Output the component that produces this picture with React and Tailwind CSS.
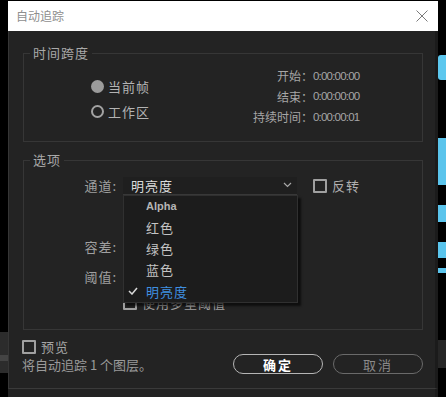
import { useState } from 'react'

const items = ['Alpha', '红色', '绿色', '蓝色', '明亮度']

function Radio({ on }) {
  return on ? (
    <span className="w-[13px] h-[13px] rounded-full bg-[#9b9b9b]" />
  ) : (
    <span className="w-[13px] h-[13px] rounded-full border-[2.5px] border-[#a3a3a3]" />
  )
}

function Box() {
  return <span className="w-[14px] h-[14px] border-2 border-[#a0a0a0] rounded-[1px] shrink-0" />
}

function Time({ label, value }) {
  return (
    <>
      <span className="text-[12px] text-right text-[#a6a6a6]">{label}</span>
      <span className="text-[11.5px] tracking-[-0.8px] whitespace-nowrap font-['Liberation_Sans',sans-serif] text-[#a6a6a6]">{value}</span>
    </>
  )
}

export default function App() {
  const [channel] = useState('明亮度')

  return (
    <div className="relative w-[446px] h-[397px] bg-black overflow-hidden font-['Noto_Sans_CJK_SC','Noto_Sans',sans-serif]">
      {/* desktop behind the dialog */}
      <div className="absolute right-0 top-[55px] w-[8px] h-[25px] bg-[#5cc7ee] rounded-l-[3px]" />
      <div className="absolute right-0 top-[138px] w-[8px] h-[47px] bg-[#5ac4ec]" />
      <div className="absolute right-0 top-[205px] w-[8px] h-[17px] bg-[#5ac4ec]" />
      <div className="absolute right-0 top-[242px] w-[8px] h-[16px] bg-[#5ac4ec]" />
      <div className="absolute right-0 top-[268px] w-[8px] h-[5px] bg-[#5ac4ec]" />
      <div className="absolute right-0 top-[340px] w-[8px] h-[28px] bg-[#262626]" />
      <div className="absolute left-0 top-[332px] w-[8px] h-[41px] bg-[#2c2c2c]" />
      <div className="absolute left-0 top-[355px] w-[8px] h-[6px] bg-[#444]" />

      {/* dialog window */}
      <div className="absolute left-[8px] top-[1px] w-[430px] h-[396px] flex flex-col">
        <div className="h-[30px] bg-white flex items-center justify-between pl-[8px] pr-[10px]">
          <span className="text-[12px] leading-none text-[#8e8e8e]">自动追踪</span>
          <svg width="12" height="12" viewBox="0 0 12 12">
            <path d="M0.5 0.5 L11.5 11.5 M11.5 0.5 L0.5 11.5" stroke="#7a7a7a" strokeWidth="1" />
          </svg>
        </div>

        <div className="h-[358px] bg-[#232323] border-l border-b border-r-[3px] border-l-[#363636] border-b-[#3a3a3a] border-r-[#1b1b1b] pl-[14px] pr-[12px] pt-[22px] flex flex-col">
          {/* 时间跨度 */}
          <div className="relative h-[89px] border border-[#363636] flex">
            <span className="absolute left-[6px] -top-[10px] px-[3px] bg-[#232323] text-[13px] leading-[18px] tracking-[1px] text-[#a9a9a9]">时间跨度</span>
            <div className="ml-[67px] pt-[20px] flex flex-col">
              <div className="h-[25px] flex items-center gap-[4px]">
                <Radio on />
                <span className="text-[13px] tracking-[1px] text-[#b3b3b3]">当前帧</span>
              </div>
              <div className="h-[25px] flex items-center gap-[4px]">
                <Radio />
                <span className="text-[13px] tracking-[1px] text-[#b3b3b3]">工作区</span>
              </div>
            </div>
            <div className="ml-auto mr-[61px] pt-[12px] grid grid-cols-[auto_48px] auto-rows-[20.5px] items-center">
              <Time label="开始：" value="0:00:00:00" />
              <Time label="结束：" value="0:00:00:00" />
              <Time label="持续时间：" value="0:00:00:01" />
            </div>
          </div>

          {/* 选项 */}
          <div className="relative mt-[18px] h-[170px] border border-[#363636] flex flex-col">
            <span className="absolute left-[6px] -top-[10px] px-[3px] bg-[#232323] text-[13px] leading-[18px] tracking-[1px] text-[#a9a9a9]">选项</span>

            <div className="mt-[15px] flex items-center">
              <span className="w-[93px] text-right text-[13px] leading-[18px] tracking-[1px] text-[#a0a0a0]">通道:</span>
              <div className="ml-[6px] w-[174px] h-[18px] bg-[#1f1f1f] border-b border-[#383838] flex items-center justify-between pl-[8px] pr-[5px]">
                <span className="text-[13px] tracking-[1px] text-[#dcdcdc]">{channel}</span>
                <svg width="9" height="6" viewBox="0 0 9 6">
                  <path d="M1 1 L4.5 4.5 L8 1" fill="none" stroke="#a8a8a8" strokeWidth="1.2" />
                </svg>
              </div>
              <div className="ml-[16px] flex items-center gap-[5px]">
                <Box />
                <span className="text-[13px] tracking-[1px] text-[#b0b0b0]">反转</span>
              </div>
            </div>

            <div className="mt-[42px] flex items-center">
              <span className="w-[93px] text-right text-[13px] leading-[18px] tracking-[1px] text-[#a0a0a0]">容差:</span>
            </div>
            <div className="mt-[12px] flex items-center">
              <span className="w-[93px] text-right text-[13px] leading-[18px] tracking-[1px] text-[#a0a0a0]">阈值:</span>
            </div>
            <div className="mt-[9px] ml-[99px] flex items-center gap-[5px]">
              <Box />
              <span className="text-[13px] leading-[16px] tracking-[1px] text-[#a0a0a0]">使用多重阈值</span>
            </div>

            {/* open channel menu */}
            <div className="absolute left-[99px] top-[34px] w-[175px] h-[108px] bg-[#1c1c1c] border border-[#303030] shadow-[3px_3px_2px_rgba(0,0,0,0.6)] flex flex-col">
              {items.map((it) => (
                <div key={it} className="h-[21.2px] flex items-center">
                  <span className="w-[22px] pl-[4px] flex items-center">
                    {it === channel && (
                      <svg width="10" height="8" viewBox="0 0 10 8">
                        <path d="M1 4 L4 7 L9 1" fill="none" stroke="#d8d8d8" strokeWidth="1.5" />
                      </svg>
                    )}
                  </span>
                  <span
                    className={
                      it === 'Alpha'
                        ? 'text-[11px] font-bold font-[\'Liberation_Sans\',sans-serif] text-[#b5b5b5]'
                        : it === channel
                        ? 'text-[13px] tracking-[1px] text-[#3f8fe0]'
                        : 'text-[13px] tracking-[1px] text-[#c4c4c4]'
                    }
                  >
                    {it}
                  </span>
                </div>
              ))}
            </div>
          </div>

          {/* footer */}
          <div className="flex items-start">
            <div className="mt-[8px] -ml-[1px] flex flex-col">
              <div className="h-[18px] flex items-center gap-[5px]">
                <Box />
                <span className="text-[13px] tracking-[1px] text-[#a5a5a5]">预览</span>
              </div>
              <span className="text-[13px] leading-[18px] text-[#9a9a9a]">将自动追踪 1 个图层。</span>
            </div>
            <div className="ml-auto mt-[24px] flex gap-[10px]">
              <button className="w-[90px] h-[20px] rounded-full border border-[#b5b5b5] text-[13px] tracking-[2px] text-white font-bold">确定</button>
              <button className="w-[90px] h-[20px] rounded-full border border-[#6a6a6a] text-[13px] tracking-[2px] text-[#8a8a8a]">取消</button>
            </div>
          </div>
        </div>
        <div className="flex-1 bg-[#222] border-r-[3px] border-[#1b1b1b]" />
      </div>
    </div>
  )
}
